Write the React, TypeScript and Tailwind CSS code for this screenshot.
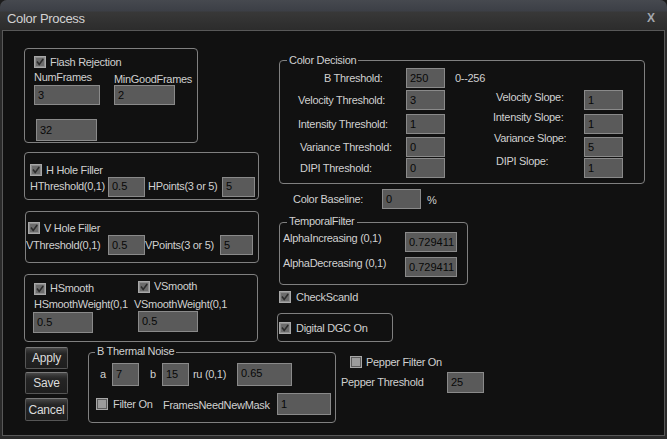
import React from "react";

const lbl =
  "text-[11px] leading-[13px] tracking-[-0.3px] text-[#d0d0d0] whitespace-nowrap";

function Field({ v, cls }: { v: string; cls: string }) {
  return (
    <div
      className={`flex shrink-0 items-center border border-[#8a8a8a] bg-[#5a5a5a] pl-[3px] text-[11px] leading-[13px] text-[#080808] ${cls}`}
    >
      {v}
    </div>
  );
}

function Check({ checked = true }: { checked?: boolean }) {
  return (
    <svg width="12" height="12" viewBox="0 0 12 12" className="shrink-0 block">
      <rect
        x="0.5"
        y="0.5"
        width="11"
        height="11"
        fill={checked ? "#6c6c6c" : "#9c9c9c"}
        stroke="#a8a8a8"
      />
      <rect
        x="1.5"
        y="1.5"
        width="9"
        height="9"
        fill="none"
        stroke={checked ? "#8c8c8c" : "#5c5c5c"}
      />
      {checked && (
        <path
          d="M3 5.5 L5.2 8.5 L9.2 3"
          fill="none"
          stroke="#2c2c2c"
          strokeWidth="1.6"
        />
      )}
    </svg>
  );
}

function Btn({ t, cls }: { t: string; cls: string }) {
  return (
    <div
      className={`flex w-[43px] items-center justify-center rounded-[2px] border border-[#565656] border-t-[#7a7a7a] bg-[linear-gradient(to_bottom,#4a4a4a_0px,#333_3px,#242424_6px,#1e1e1e_100%)] text-[12px] leading-[14px] tracking-[-0.2px] text-[#dcdcdc] ${cls}`}
    >
      {t}
    </div>
  );
}

export default function App() {
  return (
    <div className="w-[667px] h-[439px] bg-[#1c1c1c] font-['Liberation_Sans',Arial,sans-serif]">
      <div className="flex h-[439px] w-[667px] flex-col overflow-hidden rounded-t-[7px] bg-[#2a2a2a]">
        {/* Title bar */}
        <div className="flex h-[30px] shrink-0 items-center justify-between bg-[linear-gradient(to_bottom,#46494f_0px,#3c3f46_11px,#383838_12px,#2c2c2c_30px)] pl-[7px] pr-[12px] pt-[6px]">
          <span className="text-[13px] leading-[15px] tracking-[-0.3px] text-[#d2d2d2]">
            Color Process
          </span>
          <span className="text-[12px] font-bold leading-[14px] text-[#a3a7ae]">
            X
          </span>
        </div>

        {/* Body */}
        <div className="mx-[2px] mb-[3px] flex flex-1 flex-col border border-[#585858] bg-[#111111]">
          {/* Top section */}
          <div className="flex items-start">
            {/* Left column */}
            <div className="ml-[21px] mt-[17px] flex w-[235px] shrink-0 flex-col">
              {/* Flash Rejection */}
              <div className="h-[95px] w-[174px] rounded-[4px] border border-[#808080] pl-[9px] pt-[7px]">
                <div className="flex h-[12px] items-center">
                  <Check />
                  <span className={`${lbl} ml-[4px]`}>Flash Rejection</span>
                </div>
                <div className="flex h-[17px] items-start">
                  <span className={`${lbl} mt-[3px] w-[80px]`}>NumFrames</span>
                  <span className={`${lbl} mt-[5px]`}>MinGoodFrames</span>
                </div>
                <div className="flex h-[20px]">
                  <Field v="3" cls="w-[66px] h-[20px]" />
                  <Field v="2" cls="ml-[14px] w-[61px] h-[20px]" />
                </div>
                <Field v="32" cls="mt-[14px] ml-[2px] w-[61px] h-[22px]" />
              </div>

              {/* H Hole Filler */}
              <div className="mt-[9px] h-[48px] w-[235px] rounded-[4px] border border-[#808080] pl-[5px] pt-[11px]">
                <div className="flex h-[12px] items-center">
                  <Check />
                  <span className={`${lbl} ml-[4px]`}>H Hole Filler</span>
                </div>
                <div className="flex h-[21px] items-center">
                  <span className={`${lbl} w-[78px]`}>HThreshold(0,1)</span>
                  <Field v="0.5" cls="w-[37px] h-[20px]" />
                  <span className={`${lbl} ml-[3px] w-[74px]`}>HPoints(3 or 5)</span>
                  <Field v="5" cls="w-[33px] h-[20px]" />
                </div>
              </div>

              {/* V Hole Filler */}
              <div className="mt-[11px] ml-[1px] h-[52px] w-[234px] rounded-[4px] border border-[#808080] pt-[10px]">
                <div className="flex h-[12px] items-center pl-[2px]">
                  <Check />
                  <span className={`${lbl} ml-[4px]`}>V Hole Filler</span>
                </div>
                <div className="flex h-[22px] items-center">
                  <span className={`${lbl} w-[82px] overflow-hidden`}>VThreshold(0,1)</span>
                  <Field v="0.5" cls="w-[37px] h-[20px]" />
                  <span className={`${lbl} w-[75px]`}>VPoints(3 or 5)</span>
                  <Field v="5" cls="w-[33px] h-[20px]" />
                </div>
              </div>

              {/* Smooth */}
              <div className="mt-[11px] h-[68px] w-[234px] rounded-[4px] border border-[#808080]">
                <div className="flex h-[19px] items-start">
                  <div className="flex w-[113px] items-center pl-[9px] pt-[7px]">
                    <Check />
                    <span className={`${lbl} ml-[4px]`}>HSmooth</span>
                  </div>
                  <div className="flex items-center pt-[5px]">
                    <Check />
                    <span className={`${lbl} ml-[4px]`}>VSmooth</span>
                  </div>
                </div>
                <div className="mt-[4px] flex h-[13px]">
                  <span className={`${lbl} w-[109px] pl-[9px]`}>HSmoothWeight(0,1</span>
                  <span className={lbl}>VSmoothWeight(0,1</span>
                </div>
                <div className="flex items-start">
                  <div className="w-[113px] pl-[8px] pt-[1px]">
                    <Field v="0.5" cls="w-[60px] h-[21px]" />
                  </div>
                  <Field v="0.5" cls="w-[60px] h-[21px]" />
                </div>
              </div>
            </div>

            {/* Right column */}
            <div className="ml-[18px] mt-[29px] flex flex-col">
              {/* Color Decision */}
              <div className="relative ml-[2px] h-[124px] w-[366px] rounded-[4px] border border-[#808080] pt-[7px]">
                <span className={`${lbl} absolute left-[7px] top-[-7px] bg-[#111111] px-[2px]`}>
                  Color Decision
                </span>
                <div className="flex h-[20px]">
                  <div className="flex w-[126px] items-center pl-[44px]">
                    <span className={lbl}>B Threshold:</span>
                  </div>
                  <Field v="250" cls="w-[39px] h-[20px]" />
                  <div className="flex items-center pl-[10px]">
                    <span className={lbl}>0--256</span>
                  </div>
                </div>
                <div className="mt-[2px] flex h-[20px]">
                  <div className="flex w-[126px] items-center pl-[18px]">
                    <span className={lbl}>Velocity Threshold:</span>
                  </div>
                  <Field v="3" cls="w-[39px] h-[20px]" />
                  <div className="w-[139px] pl-[51px]">
                    <div className={`${lbl} mt-[1px]`}>Velocity Slope:</div>
                  </div>
                  <Field v="1" cls="w-[39px] h-[20px]" />
                </div>
                <div className="mt-[4px] flex h-[20px]">
                  <div className="flex w-[126px] items-center pl-[18px]">
                    <span className={lbl}>Intensity Threshold:</span>
                  </div>
                  <Field v="1" cls="w-[39px] h-[20px]" />
                  <div className="w-[139px] pl-[48px]">
                    <div className={`${lbl} -mt-[3px]`}>Intensity Slope:</div>
                  </div>
                  <Field v="1" cls="w-[39px] h-[20px]" />
                </div>
                <div className="mt-[3px] flex h-[20px]">
                  <div className="flex w-[126px] items-center pl-[20px]">
                    <span className={lbl}>Variance Threshold:</span>
                  </div>
                  <Field v="0" cls="w-[39px] h-[20px]" />
                  <div className="w-[139px] pl-[49px]">
                    <div className={`${lbl} -mt-[5px]`}>Variance Slope:</div>
                  </div>
                  <Field v="5" cls="w-[39px] h-[20px]" />
                </div>
                <div className="mt-[1px] flex h-[20px]">
                  <div className="flex w-[126px] items-center pl-[20px]">
                    <span className={lbl}>DIPI Threshold:</span>
                  </div>
                  <Field v="0" cls="w-[39px] h-[20px]" />
                  <div className="w-[139px] pl-[51px]">
                    <div className={`${lbl} -mt-[3px]`}>DIPI Slope:</div>
                  </div>
                  <Field v="1" cls="w-[39px] h-[20px]" />
                </div>
              </div>

              {/* Color Baseline */}
              <div className="mt-[5px] flex h-[20px] items-center">
                <span className={`${lbl} ml-[16px] w-[89px]`}>Color Baseline:</span>
                <Field v="0" cls="w-[39px] h-[20px]" />
                <span className={`${lbl} ml-[6px] mt-[2px]`}>%</span>
              </div>

              {/* TemporalFilter */}
              <div className="relative mt-[13px] ml-[2px] h-[63px] w-[189px] rounded-[4px] border border-[#808080] pl-[3px] pt-[9px]">
                <span className={`${lbl} absolute left-[7px] top-[-8px] bg-[#111111] px-[2px]`}>
                  TemporalFilter
                </span>
                <div className="flex h-[20px] items-start">
                  <span className={`${lbl} w-[122px]`}>AlphaIncreasing (0,1)</span>
                  <Field v="0.729411" cls="w-[52px] h-[20px]" />
                </div>
                <div className="mt-[5px] flex h-[20px] items-start">
                  <span className={`${lbl} w-[122px]`}>AlphaDecreasing (0,1)</span>
                  <Field v="0.729411" cls="w-[52px] h-[20px]" />
                </div>
              </div>

              {/* CheckScanId */}
              <div className="mt-[6px] ml-[2px] flex h-[12px] items-center">
                <Check />
                <span className={`${lbl} ml-[5px]`}>CheckScanId</span>
              </div>

              {/* Digital DGC On */}
              <div className="mt-[10px] h-[29px] w-[116px] rounded-[4px] border border-[#808080] pl-[1px] pt-[8px]">
                <div className="flex h-[12px] items-center">
                  <Check />
                  <span className={`${lbl} ml-[5px]`}>Digital DGC On</span>
                </div>
              </div>
            </div>
          </div>

          {/* Bottom section */}
          <div className="mt-[5px] flex items-start">
            <div className="ml-[22px] flex w-[43px] flex-col">
              <Btn t="Apply" cls="h-[22px]" />
              <Btn t="Save" cls="mt-[3px] h-[22px]" />
              <Btn t="Cancel" cls="mt-[4px] h-[23px]" />
            </div>

            {/* B Thermal Noise */}
            <div className="relative ml-[20px] mt-[5px] h-[71px] w-[248px] rounded-[4px] border border-[#808080] pt-[10px]">
              <span className={`${lbl} absolute left-[6px] top-[-8px] bg-[#111111] px-[2px]`}>
                B Thermal Noise
              </span>
              <div className="flex h-[23px] items-center">
                <span className={`${lbl} ml-[11px] w-[12px]`}>a</span>
                <Field v="7" cls="w-[27px] h-[23px]" />
                <span className={`${lbl} ml-[11px] w-[12px]`}>b</span>
                <Field v="15" cls="w-[27px] h-[23px]" />
                <span className={`${lbl} ml-[4px] w-[44px]`}>ru (0,1)</span>
                <Field v="0.65" cls="w-[55px] h-[23px] items-start pt-[3px]" />
              </div>
              <div className="mt-[7px] flex h-[22px] items-center">
                <div className="ml-[7px]">
                  <Check checked={false} />
                </div>
                <span className={`${lbl} ml-[5px] w-[50px]`}>Filter On</span>
                <span className={`${lbl} mt-[3px] w-[114px]`}>FramesNeedNewMask</span>
                <Field v="1" cls="w-[54px] h-[22px]" />
              </div>
            </div>

            {/* Pepper */}
            <div className="ml-[5px] flex flex-col">
              <div className="mt-[9px] flex h-[12px] items-center pl-[9px]">
                <Check checked={false} />
                <span className={`${lbl} ml-[4px]`}>Pepper Filter On</span>
              </div>
              <div className="mt-[4px] flex h-[21px] items-center">
                <span className={`${lbl} w-[106px]`}>Pepper Threshold</span>
                <Field v="25" cls="w-[37px] h-[21px]" />
              </div>
            </div>
          </div>
        </div>
      </div>
    </div>
  );
}
